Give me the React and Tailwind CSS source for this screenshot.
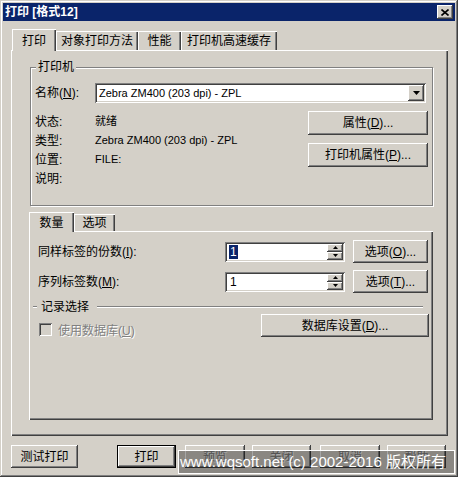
import React from "react";

const raised =
  "bg-[#d4d0c8] shadow-[inset_-1px_-1px_#404040,inset_1px_1px_#ffffff,inset_-2px_-2px_#808080,inset_2px_2px_#d4d0c8]";
const sunken =
  "shadow-[inset_1px_1px_#808080,inset_-1px_-1px_#ffffff,inset_2px_2px_#404040,inset_-2px_-2px_#d4d0c8]";
const defBtn =
  "bg-[#d4d0c8] shadow-[inset_0_0_0_1px_#000000,inset_-2px_-2px_#404040,inset_2px_2px_#ffffff,inset_-3px_-3px_#808080]";
const panel =
  "bg-[#d4d0c8] shadow-[inset_1px_1px_#ffffff,inset_-1px_-1px_#404040,inset_-2px_-2px_#808080]";
const tab =
  "bg-[#d4d0c8] shadow-[inset_1px_1px_#ffffff,inset_-1px_0_#404040,inset_-2px_0_#808080]";
const grey = "text-[#808080] [text-shadow:1px_1px_0_#ffffff]";

function K({ k }) {
  return <span className="underline">{k}</span>;
}

function Button({ className = "", children, disabled, isDefault }) {
  return (
    <div
      className={`flex items-center justify-center ${isDefault ? defBtn : raised} ${
        disabled ? grey : "text-black"
      } ${className}`}
    >
      {children}
    </div>
  );
}

function Arrow({ up }) {
  return (
    <svg width="7" height="4" viewBox="0 0 7 4">
      {up ? <path d="M3.5 0 L7 4 L0 4 Z" fill="#000" /> : <path d="M0 0 L7 0 L3.5 4 Z" fill="#000" />}
    </svg>
  );
}

function SpinEdit({ selected }) {
  return (
    <div className={`w-[120px] h-[20px] bg-white ${sunken} flex items-center pl-[4px] pr-[2px]`}>
      {selected ? (
        <span className="bg-[#0a246a] text-white leading-[14px] px-[1px]">1</span>
      ) : (
        <span className="leading-[14px] px-[1px]">1</span>
      )}
      <div className="ml-auto flex flex-col">
        <div className={`w-[16px] h-[8px] ${raised} flex items-center justify-center`}>
          <svg width="5" height="3" viewBox="0 0 5 3">
            <path d="M2.5 0 L5 3 L0 3 Z" fill="#000" />
          </svg>
        </div>
        <div className={`w-[16px] h-[8px] ${raised} flex items-center justify-center`}>
          <svg width="5" height="3" viewBox="0 0 5 3">
            <path d="M0 0 L5 0 L2.5 3 Z" fill="#000" />
          </svg>
        </div>
      </div>
    </div>
  );
}

const info = [
  ["状态:", "就绪"],
  ["类型:", "Zebra ZM400 (203 dpi) - ZPL"],
  ["位置:", "FILE:"],
  ["说明:", ""],
];

export default function App() {
  return (
    <div className="relative w-[458px] h-[477px] p-[3px] bg-[#d4d0c8] shadow-[inset_-1px_-1px_#404040,inset_1px_1px_#d4d0c8,inset_-2px_-2px_#808080,inset_2px_2px_#ffffff] font-['Liberation_Sans','Noto_Sans_CJK_SC',sans-serif] text-[12px] text-black overflow-hidden">
      {/* title bar */}
      <div className="h-[18px] bg-[#0a246a] flex items-center pl-[2px]">
        <span className="text-white font-bold leading-[16px]">打印 [格式12]</span>
        <div className={`ml-auto mr-[2px] w-[16px] h-[14px] ${raised} flex items-center justify-center`}>
          <svg width="8" height="7" viewBox="0 0 8 7">
            <path d="M0.5 0.5 L7.5 6.5 M7.5 0.5 L0.5 6.5" stroke="#000" strokeWidth="1.6" />
          </svg>
        </div>
      </div>

      <div className="pl-[8px] pt-[8px]">
        {/* tabs */}
        <div className="flex items-end h-[21px] pl-[1px]">
          <div className={`relative z-10 w-[44px] h-[22px] -mb-[1px] ${tab} flex items-start justify-center pt-[3px]`}>
            打印
          </div>
          <div className={`w-[82px] h-[19px] ${tab} flex items-center justify-center`}>对象打印方法</div>
          <div className={`w-[43px] h-[19px] ${tab} flex items-center justify-center`}>性能</div>
          <div className={`w-[96px] h-[19px] ${tab} flex items-center justify-center`}>打印机高速缓存</div>
        </div>

        <div className={`w-[437px] h-[386px] ${panel} flex flex-col pl-[19px] pt-[17px]`}>
          {/* printer group */}
          <div className="w-[403px] h-[139px] border border-[#808080] shadow-[inset_1px_1px_#ffffff,1px_1px_#ffffff] flex flex-col">
            <span className="-mt-[8px] ml-[5px] self-start px-[2px] bg-[#d4d0c8] leading-[14px]">打印机</span>
            <div className="mt-[9px] flex items-center h-[20px] pl-[4px]">
              <div className="w-[60px]">
                名称(<K k="N" />):
              </div>
              <div className={`w-[331px] h-[20px] bg-white ${sunken} flex items-center pl-[4px] pr-[2px]`}>
                <span className="text-[11px]">Zebra ZM400 (203 dpi) - ZPL</span>
                <div className={`ml-auto w-[16px] h-[16px] ${raised} flex items-center justify-center`}>
                  <Arrow />
                </div>
              </div>
            </div>
            <div className="mt-[8px] flex">
              <div className="flex flex-col pt-[1px] pl-[4px]">
                {info.map(([k, v]) => (
                  <div key={k} className="h-[19px] flex items-center">
                    <div className="w-[60px]">{k}</div>
                    <div className="text-[11px]">{v}</div>
                  </div>
                ))}
              </div>
              <div className="ml-auto mr-[4px] flex flex-col gap-[8px]">
                <Button className="w-[120px] h-[24px]">
                  属性(<K k="D" />)...
                </Button>
                <Button className="w-[120px] h-[24px]">
                  打印机属性(<K k="P" />)...
                </Button>
              </div>
            </div>
          </div>

          {/* lower tabs */}
          <div className="mt-[6px] -ml-[1px] flex items-end h-[19px]">
            <div className={`relative z-10 w-[45px] h-[20px] -mb-[1px] ${tab} flex items-start justify-center pt-[2px]`}>
              数量
            </div>
            <div className={`w-[41px] h-[17px] ${tab} flex items-center justify-center`}>选项</div>
          </div>
          <div className={`-ml-[1px] w-[404px] h-[189px] ${panel} flex flex-col pl-[9px] pr-[5px]`}>
            <div className="mt-[9px] h-[23px] flex items-center">
              <div className="w-[187px]">
                同样标签的份数(<K k="I" />):
              </div>
              <SpinEdit selected />
              <Button className="ml-[8px] w-[75px] h-[23px]">
                选项(<K k="O" />)...
              </Button>
            </div>
            <div className="mt-[7px] h-[23px] flex items-center">
              <div className="w-[187px]">
                序列标签数(<K k="M" />):
              </div>
              <SpinEdit />
              <Button className="ml-[8px] w-[75px] h-[23px]">
                选项(<K k="T" />)...
              </Button>
            </div>
            <div className="mt-[7px] h-[14px] flex items-center -ml-[5px]">
              <div className="w-[4px] h-[2px] border-t border-[#808080] border-b border-b-white" />
              <span className="ml-[4px]">记录选择</span>
              <div className="ml-[8px] w-[326px] h-[2px] border-t border-[#808080] border-b border-b-white" />
            </div>
            <div className="flex items-start">
              <div className={`mt-[9px] ml-[1px] w-[13px] h-[13px] ${sunken}`} />
              <span className={`mt-[8px] ml-[6px] ${grey}`}>
                使用数据库(<K k="U" />)
              </span>
              <Button className="ml-auto -mr-[1px] w-[168px] h-[23px]">
                数据库设置(<K k="D" />)...
              </Button>
            </div>
          </div>
        </div>

        {/* bottom buttons */}
        <div className="mt-[9px] flex">
          <Button className="w-[67px] h-[23px]">测试打印</Button>
          <Button isDefault className="ml-[39px] w-[59px] h-[23px]">
            打印
          </Button>
          <Button disabled className="ml-[9px] w-[60px] h-[23px]">
            预览
          </Button>
          <Button disabled className="ml-[7px] w-[59px] h-[23px]">
            关闭
          </Button>
          <Button disabled className="ml-[9px] w-[60px] h-[23px]">
            取消
          </Button>
          <Button disabled className="ml-[7px] w-[59px] h-[23px]">
            帮助
          </Button>
        </div>
      </div>

      {/* watermark overlay */}
      <div className="absolute left-[178px] top-[450px] w-[277px] h-[24px] border border-white bg-black/35 flex items-center pl-[1px] text-white text-[15px] whitespace-nowrap">
        www.wqsoft.net (c) 2002-2016 版权所有
      </div>
    </div>
  );
}
